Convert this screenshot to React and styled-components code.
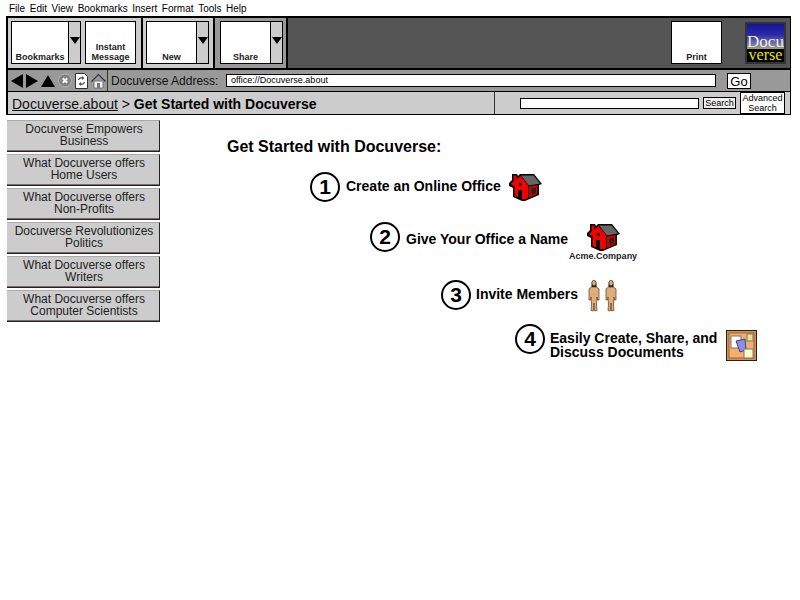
import styled, { createGlobalStyle } from "styled-components";

const GlobalStyle = createGlobalStyle`
  html, body { margin: 0; padding: 0; background: #fff; }
  body { font-family: "Liberation Sans", Arial, sans-serif; color: #000; }
`;

const Page = styled.div`
  width: 800px;
  height: 600px;
  overflow: hidden;
`;

const MenuBar = styled.div`
  height: 16px;
  padding-left: 9px;
  display: flex;
  gap: 4.6px;
  align-items: center;
  font-size: 10px;
`;

const Chrome = styled.div`
  margin: 0 0 0 6px;
  border: solid #000;
  border-width: 2px 1px 1px 2px;
  width: 782px;
`;

const Toolbar = styled.div`
  height: 50px;
  display: flex;
  background: #555;
  border-bottom: 2px solid #000;
`;

const Group = styled.div`
  display: flex;
  gap: 4px;
  padding: ${(p) => p.$pad};
  background: ${(p) => p.$bg};
  border-right: 2px solid #000;
`;

const ToolButton = styled.div`
  width: ${(p) => p.$w || 49}px;
  height: 40px;
  background: #fff;
  border: 1px solid #000;
  display: flex;
  flex-direction: column;
  justify-content: flex-end;
  align-items: center;
  text-align: center;
  font-size: 9px;
  font-weight: bold;
  line-height: 10px;
  padding-bottom: 1px;
  color: #222;
`;

const SplitButton = styled.div`
  display: flex;
`;

const ArrowPart = styled.div`
  width: 11px;
  height: 26px;
  background: #ccc;
  border: 1px solid #000;
  border-left: none;
  display: flex;
  justify-content: center;
  padding-top: 15px;
  &::before {
    content: "";
    width: 0;
    height: 0;
    border-left: 5px solid transparent;
    border-right: 5px solid transparent;
    border-top: 7px solid #000;
  }
`;

const RightTools = styled.div`
  margin-left: auto;
  display: flex;
  padding: 3px 4px 0 0;
  gap: 23px;
`;

const Logo = styled.div`
  width: 37px;
  height: 38px;
  margin-top: 1px;
  border: 2px solid #333;
  background: linear-gradient(#14149c 0%, #2a2aa8 28%, #8d8d98 60%, #a8a838 68%);
  font-family: "Liberation Serif", serif;
  display: flex;
  flex-direction: column;
  justify-content: flex-end;
  align-items: center;
  overflow: hidden;
`;

const LogoTop = styled.div`
  color: #eee;
  font-size: 17px;
  line-height: 15px;
  white-space: nowrap;
`;

const LogoBottom = styled.div`
  width: 100%;
  text-align: center;
  background: #000;
  color: #e8e800;
  font-size: 16px;
  line-height: 12px;
  padding-bottom: 1px;
`;

const AddressRow = styled.div`
  height: 21px;
  background: #999;
  display: flex;
  align-items: center;
  border-bottom: 1px solid #000;
`;

const NavIcons = styled.div`
  width: 100px;
  height: 100%;
  padding-left: 3px;
  display: flex;
  align-items: center;
  gap: 3px;
  border-right: 1px solid #333;
  box-sizing: border-box;
`;

const AddressLabel = styled.span`
  font-size: 12px;
  margin-left: 3px;
  width: 115px;
  color: #111;
`;

const AddressField = styled.div`
  width: 484px;
  height: 11px;
  line-height: 11px;
  background: #fff;
  border: 1px solid #000;
  font-size: 9px;
  padding-left: 4px;
`;

const GoButton = styled.div`
  width: 22px;
  height: 14px;
  line-height: 15px;
  margin-left: 11px;
  background: #fff;
  border: 1px solid #000;
  font-size: 13px;
  text-align: center;
`;

const CrumbRow = styled.div`
  height: 22px;
  background: #ccc;
  display: flex;
  align-items: center;
`;

const Crumb = styled.div`
  width: 482px;
  height: 100%;
  padding-left: 4px;
  font-size: 14px;
  line-height: 25px;
  border-right: 1px solid #333;
  color: #111;
  a { color: #111; text-decoration: underline; }
  b { color: #000; }
`;

const SearchField = styled.div`
  width: 177px;
  height: 9px;
  margin-left: 25px;
  background: #fff;
  border: 1px solid #000;
`;

const SearchButton = styled.div`
  margin-left: 4px;
  width: 31px;
  height: 10px;
  line-height: 10px;
  background: #eee;
  border: 1px solid #000;
  font-size: 9px;
  text-align: center;
`;

const AdvancedButton = styled.div`
  margin-left: 4px;
  width: 43px;
  height: 20px;
  background: #fff;
  border: 1px solid #000;
  font-size: 9px;
  line-height: 10px;
  text-align: center;
`;

const Body = styled.div`
  display: flex;
`;

const Sidebar = styled.div`
  width: 153px;
  margin: 5px 0 0 7px;
  display: flex;
  flex-direction: column;
  gap: 2px;
`;

const SideButton = styled.div`
  height: 28px;
  padding: 2px 0 0 2px;
  background: #ccc;
  border-top: 1px solid #aaa;
  border-right: 1px solid #222;
  border-bottom: 1px solid #222;
  box-shadow: inset 0 -1px 0 #7a6a6a;
  text-align: center;
  font-size: 12px;
  line-height: 12px;
  color: #222;
`;

const Content = styled.div`
  flex: 1;
  padding: 23px 0 0 67px;
`;

const Heading = styled.h1`
  margin: 0;
  font-size: 16px;
  line-height: 18px;
  font-weight: bold;
`;

const Step = styled.div`
  display: flex;
  align-items: ${(p) => p.$align || "center"};
  margin-left: ${(p) => p.$left}px;
  margin-top: ${(p) => p.$top}px;
`;

const Circle = styled.div`
  width: 26px;
  height: 26px;
  flex: none;
  border: 2px solid #000;
  border-radius: 50%;
  font-size: 21px;
  font-weight: bold;
  line-height: 26px;
  text-align: center;
`;

const StepText = styled.div`
  margin: ${(p) => p.$margin || "0 0 0 6px"};
  font-size: 14px;
  font-weight: bold;
  line-height: 14px;
  white-space: nowrap;
`;

const StepIcon = styled.div`
  margin: ${(p) => p.$margin};
  position: relative;
  display: flex;
  gap: ${(p) => p.$gap || 0}px;
`;

const Caption = styled.div`
  position: absolute;
  top: 28px;
  left: -18px;
  font-size: 9px;
  font-weight: bold;
  white-space: nowrap;
  color: #222;
`;

const Arrow = ({ dir }) => {
  const pts = {
    left: "12,0 12,14 0,7",
    right: "0,0 0,14 12,7",
    up: "0,13 14,13 7,1",
  };
  return (
    <svg width={dir === "up" ? 14 : 12} height="14" viewBox={dir === "up" ? "0 0 14 14" : "0 0 12 14"}>
      <polygon points={pts[dir]} fill="#000" />
    </svg>
  );
};

const StopIcon = () => (
  <svg width="14" height="15" viewBox="0 0 14 15">
    <circle cx="7" cy="7.500" r="6.500" fill="#808080" stroke="#b5b5b5" />
    <path d="M4.800 5.300l4.400 4.400M9.200 5.300l-4.400 4.400" stroke="#fff" strokeWidth="2" />
  </svg>
);

const ReloadIcon = () => (
  <svg width="13" height="16" viewBox="0 0 13 16">
    <path d="M.5.5h9l3 3v12H.5z" fill="#fff" stroke="#333" />
    <path d="M3.500 7a3 3 0 0 1 4-2M9.500 9a3 3 0 0 1-4 2" stroke="#555" strokeWidth="1.300" fill="none" />
    <path d="M7 3l2.500 2L7 7zM6 9l-2.500 2L6 13z" fill="#555" />
  </svg>
);

const HomeSmall = () => (
  <svg width="15" height="16" viewBox="0 0 15 16">
    <path d="M3 15V8h9v7z" fill="#eee" stroke="#666" strokeWidth=".8" />
    <path d="M.5 8.500l7-7 7 7" fill="none" stroke="#333" strokeWidth="1.200" />
    <rect x="6" y="10" width="3" height="5" fill="#777" />
  </svg>
);

const House = () => (
  <svg width="33" height="29" viewBox="0 0 33 29">
    <polygon points="3,1 8,1 9,3 11,1 25,1 33,11 30,12 30,22 16,28 13,28 4,24 4,15 0,13 0,10 3,7" fill="#000" />
    <polygon points="12,2.500 24.500,2.500 31,10.500 20,12.500" fill="#666" />
    <polygon points="4.500,2.500 7.500,2.500 7.500,7 4.500,9" fill="#e00000" />
    <polygon points="1.500,11 11.500,3 19,12 19,25.500 14,26.500 5.500,23 5.500,13" fill="#f00000" />
    <polygon points="20,13.500 28.500,12 28.500,21 20,25" fill="#c80000" />
    <polygon points="22.500,15.500 27,14.500 27,20 22.500,22" fill="#222" />
    <polygon points="9,17 13,17 13,26 9,24.500" fill="#000" />
    <rect x="10" y="10" width="3" height="2.500" fill="#000" />
  </svg>
);

const Person = () => (
  <svg width="12" height="34" viewBox="0 0 12 34">
    <path d="M3.500 4.500a2.600 3.500 0 0 1 5 0V10h-5z" fill="#1e1710" />
    <ellipse cx="6" cy="5" rx="1.800" ry="2.500" fill="#e0ae78" />
    <path d="M3.500 9h5l2.500 2v11h-1.500l-.5-3-.5 7 .5 6.500-2.300.5-.7-8-.7 8-2.300-.5.5-6.500-.5-7-.5 3H1V11z" fill="#e0ae78" stroke="#5a3a1c" strokeWidth=".7" />
  </svg>
);

const BoardIcon = () => (
  <svg width="31" height="31" viewBox="0 0 31 31">
    <rect x=".5" y=".5" width="30" height="30" fill="#d98d50" stroke="#222" />
    <rect x="3" y="3" width="25" height="25" fill="#f0b070" stroke="#a86030" />
    <rect x="5" y="6" width="10" height="12" fill="#fff" stroke="#777" />
    <rect x="21" y="4" width="6" height="7" fill="#e6e28a" stroke="#777" />
    <path d="M10 11l9-2 1 11-6 2z" fill="#8a8cf0" stroke="#446" />
    <rect x="18" y="19" width="9" height="9" fill="#fdfbc8" stroke="#777" />
  </svg>
);

const sideItems = [
  ["Docuverse Empowers", "Business"],
  ["What Docuverse offers", "Home Users"],
  ["What Docuverse offers", "Non-Profits"],
  ["Docuverse Revolutionizes", "Politics"],
  ["What Docuverse offers", "Writers"],
  ["What Docuverse offers", "Computer Scientists"],
];

const menus = ["File", "Edit", "View", "Bookmarks", "Insert", "Format", "Tools", "Help"];

export default function App() {
  return (
    <Page>
      <GlobalStyle />
      <MenuBar>
        {menus.map((m) => (
          <span key={m}>{m}</span>
        ))}
      </MenuBar>
      <Chrome>
        <Toolbar>
          <Group $pad="3px 5px 3px 3px" $bg="#ccc">
            <SplitButton>
              <ToolButton $w={56}>Bookmarks</ToolButton>
              <ArrowPart />
            </SplitButton>
            <ToolButton>
              Instant
              <br />
              Message
            </ToolButton>
          </Group>
          <Group $pad="3px 4px 3px 3px" $bg="#ccc">
            <SplitButton>
              <ToolButton>New</ToolButton>
              <ArrowPart />
            </SplitButton>
          </Group>
          <Group $pad="3px 3px 3px 5px" $bg="#999">
            <SplitButton>
              <ToolButton>Share</ToolButton>
              <ArrowPart />
            </SplitButton>
          </Group>
          <RightTools>
            <ToolButton>Print</ToolButton>
            <Logo>
              <LogoTop>Docu</LogoTop>
              <LogoBottom>verse</LogoBottom>
            </Logo>
          </RightTools>
        </Toolbar>
        <AddressRow>
          <NavIcons>
            <Arrow dir="left" />
            <Arrow dir="right" />
            <Arrow dir="up" />
            <StopIcon />
            <ReloadIcon />
            <HomeSmall />
          </NavIcons>
          <AddressLabel>Docuverse Address:</AddressLabel>
          <AddressField>office://Docuverse.about</AddressField>
          <GoButton>Go</GoButton>
        </AddressRow>
        <CrumbRow>
          <Crumb>
            <a href="#about">Docuverse.about</a> &gt; <b>Get Started with Docuverse</b>
          </Crumb>
          <SearchField />
          <SearchButton>Search</SearchButton>
          <AdvancedButton>
            Advanced
            <br />
            Search
          </AdvancedButton>
        </CrumbRow>
      </Chrome>
      <Body>
        <Sidebar>
          {sideItems.map(([a, b]) => (
            <SideButton key={a + b}>
              {a}
              <br />
              {b}
            </SideButton>
          ))}
        </Sidebar>
        <Content>
          <Heading>Get Started with Docuverse:</Heading>
          <Step $left={83} $top={16}>
            <Circle>1</Circle>
            <StepText $margin="0 0 2px 6px">Create an Online Office</StepText>
            <StepIcon $margin="0 0 0 8px">
              <House />
            </StepIcon>
          </Step>
          <Step $left={143} $top={20}>
            <Circle>2</Circle>
            <StepText $margin="4px 0 0 6px">Give Your Office a Name</StepText>
            <StepIcon $margin="0 0 0 19px">
              <House />
              <Caption>Acme.Company</Caption>
            </StepIcon>
          </Step>
          <Step $left={214} $top={26}>
            <Circle>3</Circle>
            <StepText $margin="0 0 3px 5px">Invite Members</StepText>
            <StepIcon $margin="0 0 0 10px" $gap={5}>
              <Person />
              <Person />
            </StepIcon>
          </Step>
          <Step $left={288} $top={12} $align="flex-start">
            <Circle>4</Circle>
            <StepText $margin="7px 0 0 5px">
              Easily Create, Share, and
              <br />
              Discuss Documents
            </StepText>
            <StepIcon $margin="6px 0 0 9px">
              <BoardIcon />
            </StepIcon>
          </Step>
        </Content>
      </Body>
    </Page>
  );
}
